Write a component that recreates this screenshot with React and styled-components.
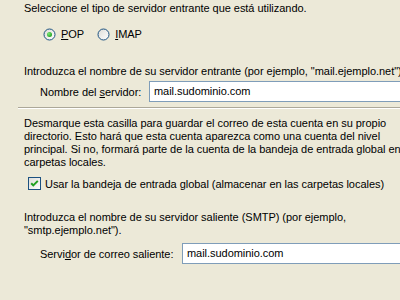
import React from "react"
import styled, { createGlobalStyle } from "styled-components"

const GlobalStyle = createGlobalStyle`
  html, body {
    margin: 0;
    padding: 0;
    background: #ece9d8;
    overflow: hidden;
  }
  body {
    font-family: "Liberation Sans", Arial, sans-serif;
    font-size: 11px;
    color: #000;
  }
`

const Page = styled.div`
  width: 480px;
  padding: 2px 0 0 24px;
  letter-spacing: -0.04px;
`

const Text = styled.p`
  margin: ${(p) => p.$top || 0}px 0 0;
  line-height: 13px;
  white-space: nowrap;
`

const Key = styled.span`
  text-decoration: underline;
`

const OptionRow = styled.div`
  display: flex;
  align-items: center;
  gap: 13px;
  margin-top: 13px;
  padding-left: 19px;
  height: 13px;
`

const Option = styled.label`
  display: flex;
  align-items: center;
  gap: 5px;
  line-height: 13px;
`

const FieldRow = styled.div`
  display: flex;
  align-items: center;
  margin-top: ${(p) => p.$top || 0}px;
  padding-left: 16px;
  height: 21px;
`

const FieldLabel = styled.span`
  width: ${(p) => p.$width}px;
  flex: none;
  white-space: nowrap;
`

const Input = styled.div`
  flex: 1;
  height: 21px;
  box-sizing: border-box;
  border: 1px solid #7f9db9;
  background: #fff;
  padding: 0 4px;
  line-height: 19px;
  white-space: nowrap;
`

const Separator = styled.div`
  margin: 5px 0 0 -6px;
  border-top: 1px solid #aca899;
  border-bottom: 1px solid #fff;
`

const CheckRow = styled.label`
  display: flex;
  align-items: center;
  gap: 4px;
  margin-top: 8px;
  padding-left: 4px;
  height: 13px;
  white-space: nowrap;
`

const Radio = ({ checked }) => (
  <svg width="13" height="13" viewBox="0 0 13 13">
    <defs>
      <linearGradient id="rfill" x1="0" y1="0" x2="1" y2="1">
        <stop offset="0" stopColor="#dcdcd7" />
        <stop offset="1" stopColor="#ffffff" />
      </linearGradient>
      <radialGradient id="rdot" cx="0.35" cy="0.35" r="0.7">
        <stop offset="0" stopColor="#7be877" />
        <stop offset="1" stopColor="#21a121" />
      </radialGradient>
    </defs>
    <circle cx="6.5" cy="6.5" r="5.5" fill="url(#rfill)" stroke="#1c5180" strokeWidth="1" />
    {checked && <circle cx="6.5" cy="6.5" r="2.5" fill="url(#rdot)" />}
  </svg>
)

const Checkbox = () => (
  <svg width="13" height="13" viewBox="0 0 13 13">
    <defs>
      <linearGradient id="cfill" x1="0" y1="0" x2="1" y2="1">
        <stop offset="0" stopColor="#dcdcd7" />
        <stop offset="1" stopColor="#ffffff" />
      </linearGradient>
    </defs>
    <rect x="0.5" y="0.5" width="12" height="12" fill="url(#cfill)" stroke="#1c5180" />
    <polyline points="3.2,6.2 5.3,8.4 9.8,3.9" fill="none" stroke="#21a121" strokeWidth="2" />
  </svg>
)

export default function App() {
  return (
    <Page>
      <GlobalStyle />
      <Text>Seleccione el tipo de servidor entrante que está utilizando.</Text>

      <OptionRow>
        <Option>
          <Radio checked />
          <span>
            <Key>P</Key>OP
          </span>
        </Option>
        <Option>
          <Radio />
          <span>
            <Key>I</Key>MAP
          </span>
        </Option>
      </OptionRow>

      <Text $top={24}>
        Introduzca el nombre de su servidor entrante (por ejemplo, "mail.ejemplo.net").
      </Text>
      <FieldRow $top={3}>
        <FieldLabel $width={109}>
          Nombre del <Key>s</Key>ervidor:
        </FieldLabel>
        <Input>mail.sudominio.com</Input>
      </FieldRow>

      <Separator />

      <Text $top={8}>
        Desmarque esta casilla para guardar el correo de esta cuenta en su propio
        <br />
        directorio. Esto hará que esta cuenta aparezca como una cuenta del nivel
        <br />
        principal. Si no, formará parte de la cuenta de la bandeja de entrada global en
        <br />
        carpetas locales.
      </Text>

      <CheckRow>
        <Checkbox />
        <span>Usar la bandeja de entrada global (almacenar en las carpetas locales)</span>
      </CheckRow>

      <Text $top={21}>
        Introduzca el nombre de su servidor saliente (SMTP) (por ejemplo,
        <br />
        "smtp.ejemplo.net").
      </Text>
      <FieldRow $top={6}>
        <FieldLabel $width={142}>
          Servi<Key>d</Key>or de correo saliente:
        </FieldLabel>
        <Input>mail.sudominio.com</Input>
      </FieldRow>
    </Page>
  )
}
